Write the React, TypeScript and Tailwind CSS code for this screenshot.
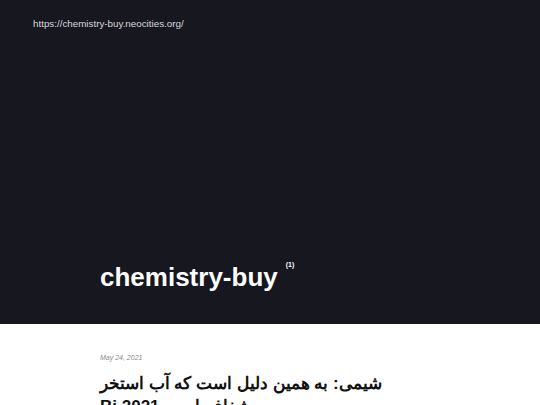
export default function App() {
  return (
    <div className="min-h-screen bg-white font-['Liberation_Sans',Arial,sans-serif]">
      <header className="flex h-[324px] flex-col bg-[#17171f]">
        <div className="px-[33px] pt-[17px] text-[9.8px] leading-[14px] text-[#d8d8dc]">
          https://chemistry-buy.neocities.org/
        </div>
        <div className="mt-auto flex items-start px-[100px] pb-[32px]">
          <h1 className="text-[26px] font-bold leading-[30px] text-white">chemistry-buy</h1>
          <sup className="ml-[8px] mt-[2px] text-[7px] font-bold leading-none text-white">(1)</sup>
        </div>
      </header>
      <main className="px-[100px] pt-[29px]">
        <div className="text-[7px] italic leading-[10px] text-[#8a8a8a]">May 24, 2021</div>
        <h2 className="mt-[9px] w-[300px] font-['Liberation_Sans','Noto_Sans',sans-serif] text-[17px] font-bold leading-[23px] text-[#111]">
          شیمی: به همین دلیل است که آب استخر Bi 2021 شفاف است
        </h2>
      </main>
    </div>
  );
}
